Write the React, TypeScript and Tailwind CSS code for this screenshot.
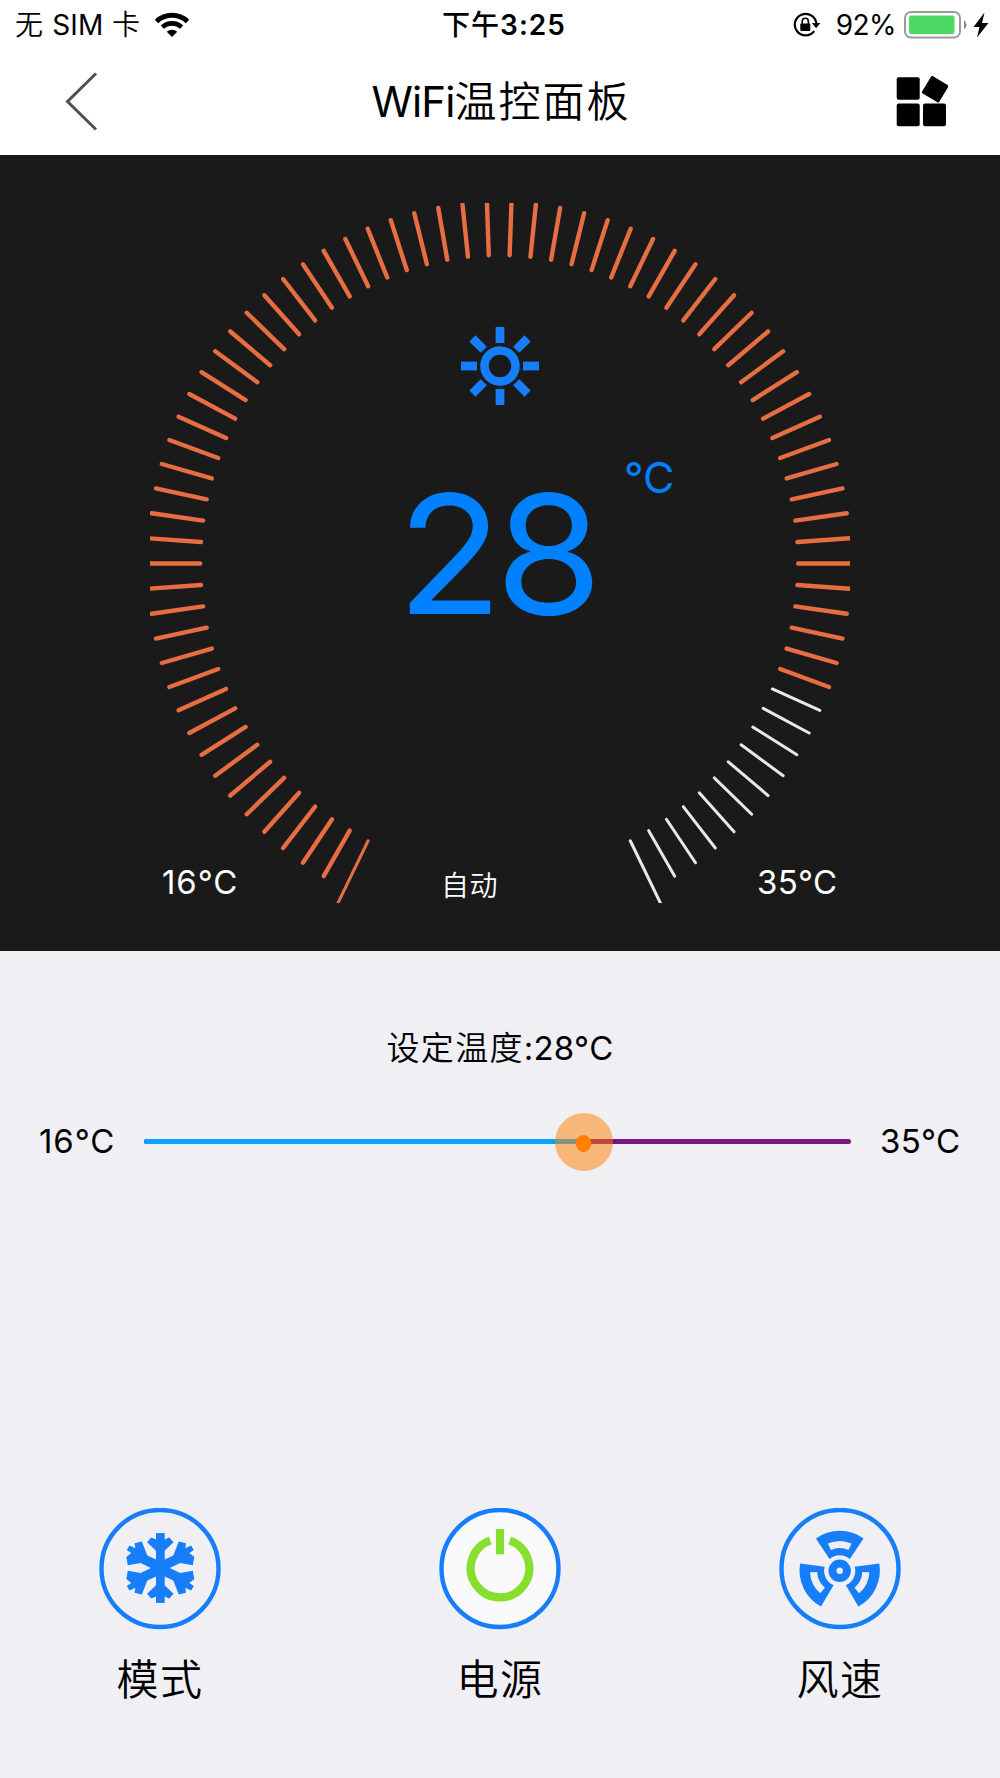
import React from "react";

const MIN = 16;
const MAX = 35;
const TICKS = 78;
const ACTIVE_TICKS = 67;

function StatusBar() {
  return (
    <div className="grid h-[50px] grid-cols-3 items-center text-[28px] leading-none whitespace-nowrap">
      <div className="flex items-center gap-[14px] pl-[15px]">
        <span className="font-[350] tracking-[0.7px]">
          无 <span className="font-normal tracking-[0.1px]">SIM</span> 卡
        </span>
        <svg width="34" height="26" viewBox="0 0 34 26">
          <g fill="none" stroke="#000">
            <path d="M1.5 9.5a22.5 22.5 0 0 1 31 0" strokeWidth="5" />
            <path d="M7.4 15.2a14 14 0 0 1 19.2 0" strokeWidth="4.6" />
          </g>
          <path d="M17 25l-5.2-5.2a7.5 7.5 0 0 1 10.4 0z" />
        </svg>
      </div>
      <div className="pl-[8px] text-center font-medium tracking-[1px]">
        下午<span className="font-semibold">3:25</span>
      </div>
      <div className="flex items-center justify-end pr-[11px]">
        <svg width="28" height="26" viewBox="0 0 28 26" className="mr-[15px]">
          <path
            d="M21.2 19.2A10.8 10.8 0 1 1 23.4 12"
            fill="none"
            stroke="#000"
            strokeWidth="2.2"
          />
          <path d="M18.8 11h8.6l-4.3 5.2z" />
          <rect x="7.3" y="11.5" width="10" height="7.5" rx="1" />
          <path d="M9.2 12V9.4a3.1 3.1 0 0 1 6.2 0V12" fill="none" stroke="#000" strokeWidth="1.6" />
        </svg>
        <span className="mr-2 tracking-[-0.6px]">92%</span>
        <svg width="64" height="28" viewBox="0 0 64 28">
          <rect x="1" y="1" width="55" height="25.6" rx="6" fill="none" stroke="#9b9b9b" strokeWidth="2" />
          <rect x="5" y="4.5" width="45.5" height="18.5" rx="2" fill="#4cd964" />
          <path d="M60 9q5.4 4.8 0 9.6z" fill="#8b8b8b" />
        </svg>
        <svg width="16" height="26" viewBox="0 0 16 26" className="ml-[5px]">
          <path d="M11.5 0.5L0.5 15h6L4 25.5l11.5-14.5H9z" />
        </svg>
      </div>
    </div>
  );
}

function Header() {
  return (
    <div className="flex h-[104.5px] items-center justify-between pr-[52px] pl-[65px]">
      <svg width="34" height="60" viewBox="0 0 34 60" fill="none">
        <path d="M31 1.5L2.5 29.5L31 57.5" stroke="#505050" strokeWidth="3" />
      </svg>
      <h1 className="pb-[2px] pl-[7px] text-[42px] font-[350] tracking-[2px] whitespace-nowrap">
        <span className="font-normal tracking-[-0.9px]">WiFi</span>温控面板
      </h1>
      <svg width="52" height="52" viewBox="0 0 52 52">
        <rect x="0.7" y="1.2" width="23" height="22.6" rx="2" />
        <rect x="0.7" y="27.6" width="23" height="22.6" rx="2" />
        <rect x="27" y="27.6" width="23" height="22.6" rx="2" />
        <rect x="29.2" y="3.2" width="20" height="20" rx="1" transform="rotate(31 39.2 13.2)" />
      </svg>
    </div>
  );
}

function Ticks() {
  const cx = 349.2;
  const cy = 360.5;
  return (
    <svg width="700" height="700" viewBox="0 0 700 700" className="col-start-1 row-start-1">
      {Array.from({ length: TICKS }, (_, i) => {
        const a = ((i * 4 - 154) * Math.PI) / 180;
        const edge = i === 0 || i === TICKS - 1;
        const active = i < ACTIVE_TICKS;
        const out = edge ? 20 : 0;
        return (
          <line
            key={i}
            x1={cx + 299 * Math.sin(a)}
            y1={cy - 308.5 * Math.cos(a)}
            x2={cx + (351 + out) * Math.sin(a)}
            y2={cy - (361 + out) * Math.cos(a)}
            stroke={active ? "#e76d42" : "#e8e8e8"}
            strokeWidth={active && !edge ? 4.4 : 3}
            strokeLinecap="round"
          />
        );
      })}
    </svg>
  );
}

function SunIcon() {
  return (
    <svg width="80" height="80" viewBox="-40 -40 80 80" className="text-[#177efb]">
      <circle r="15.5" fill="none" stroke="currentColor" strokeWidth="8.6" />
      {[0, 45, 90, 135, 180, 225, 270, 315].map((deg) => (
        <rect key={deg} x="-4.4" y="-39" width="8.8" height="16" fill="currentColor" transform={`rotate(${deg})`} />
      ))}
    </svg>
  );
}

function Dial({ value }: { value: number }) {
  return (
    <div className="grid h-[796px] grid-cols-1 justify-items-center bg-[#1a1a1a] pt-12">
      <Ticks />
      <div className="col-start-1 row-start-1 flex w-[700px] flex-col items-center pt-[123px] text-[#0081ff]">
        <SunIcon />
        <div className="relative mt-[43px] w-[206px] pr-[9px] text-center text-[166px] leading-[210px] whitespace-nowrap">
          <span className="inline-block origin-center scale-x-[1.045] tracking-[-7px]">{value}</span>
          <span className="absolute top-[7px] left-[227px] text-[43px] leading-none">°C</span>
        </div>
      </div>
      <div className="col-start-1 row-start-1 flex w-full items-baseline self-start pt-[659px] text-[33px] leading-[40px] text-white">
        <span className="w-[441px] pl-[162px] tracking-[0.9px]">{MIN}°C</span>
        <span className="w-[316px] translate-y-[2px] text-[28px] font-[350] tracking-[0.6px]">自动</span>
        <span className="tracking-[0.3px]">{MAX}°C</span>
      </div>
    </div>
  );
}

function Slider({ value }: { value: number }) {
  const percent = ((value - MIN) / (MAX - MIN)) * 100;
  return (
    <div className="pt-[77px]">
      <p className="text-center text-[33px] leading-[40px] tracking-[0.2px]">
        <span className="font-[350] tracking-[1.3px]">设定温度</span>:{value}°C
      </p>
      <div className="mt-[45px] flex h-[58px] items-center text-[33px] leading-none whitespace-nowrap">
        <span className="w-[144px] pl-[39px] tracking-[0.9px]">{MIN}°C</span>
        <div className="relative h-[5px] w-[707px] rounded-full bg-[#7b1380]">
          <div className="h-full rounded-l-full bg-[#0aa4ff]" style={{ width: `${percent - 0.95}%` }} />
          <div
            className="absolute -top-[26px] flex size-[58px] -translate-x-1/2 items-center justify-center rounded-full bg-[#ff8000]/50"
            style={{ left: `${percent - 0.95}%` }}>
            <div className="mt-[2px] h-[17px] w-[15px] rounded-full bg-[#ff8000]" />
          </div>
        </div>
        <span className="pl-[29px] tracking-[0.3px]">{MAX}°C</span>
      </div>
    </div>
  );
}

function SnowIcon() {
  return (
    <g fill="#177efb" transform="translate(0.3 -1)">
      <rect x="-4" y="-34.7" width="8" height="69.4" />
      <rect x="-9" y="-4" width="18" height="8" />
      {["scale(1 1)", "scale(-1 1)", "scale(1 -1)", "scale(-1 -1)"].map((flip) => (
        <path
          key={flip}
          transform={flip}
          d="M0 0V-34.7H4.3V-28.5L9 -30.5L13.2 -25.7L4.3 -17.3V-8.5L13 -12.5L18.5 -26.5L25.7 -24.8L25 -19.7L30.8 -22.5L33.5 -18L29 -15L34 -11L32.5 -2.7L19.7 -5L9.5 0Z"
        />
      ))}
    </g>
  );
}

function PowerIcon() {
  return (
    <g fill="none" stroke="#85df2c" strokeWidth="8.2">
      <path d="M-9.7 -27.6A29.3 29.3 0 1 0 9.7 -27.6" transform="translate(0 -0.9)" />
      <path d="M0 -40V-14.7" />
    </g>
  );
}

function FanIcon() {
  return (
    <g transform="translate(-0.3 1.8)">
      {[0, 116, -116].map((deg) => (
        <path
          key={deg}
          transform={`rotate(${deg})`}
          fill="#177efb"
          fillRule="evenodd"
          d="M-23.8 -32.4A40.6 40.6 0 0 1 23.8 -32.4L10.2 -11.7A15.3 15.3 0 0 0 -10.2 -11.7ZM-11.8 -27.3L-8.8 -20.8A22.3 22.3 0 0 1 8.8 -20.8L11.8 -27.3A29.8 29.8 0 0 0 -11.8 -27.3Z"
        />
      ))}
      <circle r="7.2" fill="none" stroke="#177efb" strokeWidth="8" />
    </g>
  );
}

interface IControlProps {
  label: string;
  fill?: string;
  children: React.ReactNode;
}

function Control({ label, fill = "none", children }: IControlProps) {
  return (
    <button type="button" className="flex w-[122px] flex-col items-center">
      <svg width="122" height="122" viewBox="-61 -61 122 122">
        <circle r="58.5" cy="-0.5" fill={fill} stroke="#177efb" strokeWidth="4.4" />
        {children}
      </svg>
      <span className="mt-[20px] text-[42px] leading-[60px] font-[350] tracking-[1.5px] whitespace-nowrap">{label}</span>
    </button>
  );
}

function App() {
  const value = 28;

  return (
    <div className="flex h-[1778px] w-[1000px] flex-col overflow-hidden bg-[#efeff4] font-['Inter','Noto_Sans_CJK_SC',sans-serif] text-black">
      <div className="bg-white">
        <StatusBar />
        <Header />
      </div>
      <Dial value={value} />
      <Slider value={value} />
      <div className="mt-auto flex justify-between px-[99px] pb-[68px]">
        <Control label="模式">
          <SnowIcon />
        </Control>
        <Control label="电源" fill="#fafafc">
          <PowerIcon />
        </Control>
        <Control label="风速">
          <FanIcon />
        </Control>
      </div>
    </div>
  );
}

export default App;
